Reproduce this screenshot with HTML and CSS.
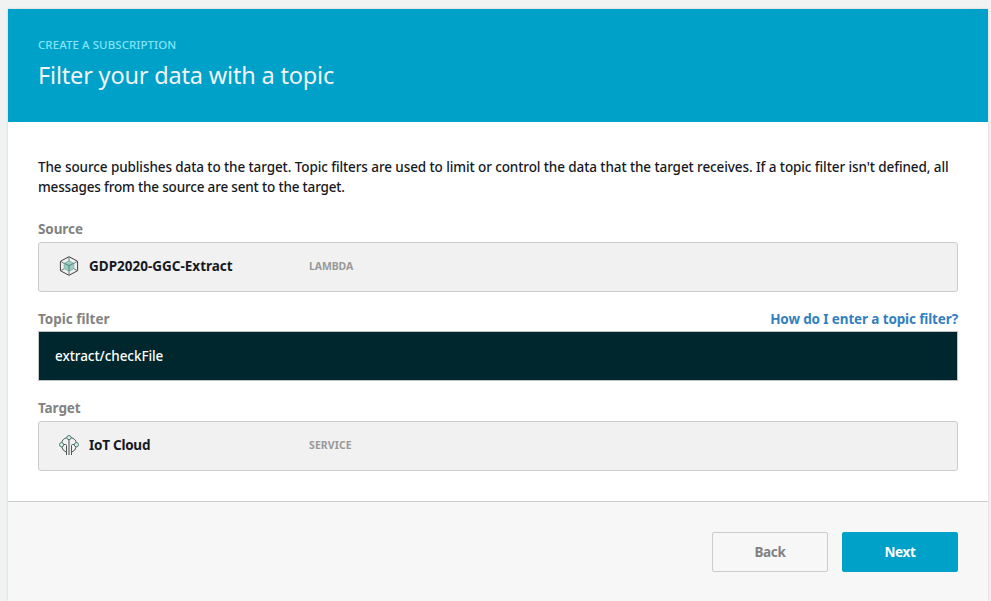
FILE: index.html
```html
<!DOCTYPE html>
<html lang="en">
<head>
<meta charset="utf-8">
<title>Create a subscription</title>
<link rel="stylesheet" href="styles.css">
</head>
<body>
<main class="panel">
  <header class="panel-header">
    <div class="eyebrow">CREATE A SUBSCRIPTION</div>
    <h1 class="title">Filter your data with a topic</h1>
  </header>
  <section class="content">
    <p class="intro"><span class="line-one">The source publishes data to the target. Topic filters are used to limit or control the data that the target receives. If a topic filter isn't defined, all</span><br><span class="line-two">messages from the source are sent to the target.</span></p>
    <div class="field">
      <div class="label-row"><span class="label source-label">Source</span></div>
      <div class="card">
        <svg class="icon" viewBox="0 0 20 20" fill="none">
          <path d="M10 .7 18.6 5.3V14.7L10 19.3 1.4 14.7V5.3Z" stroke="#3c4043"/>
          <path d="M10 1V6M2 5.5 6 8M18 5.5 14 8M2 14.5 5.5 12.5M18 14.5 14.5 12.5M10 14V19" stroke="#73777a"/>
          <path d="M10 4.8 14.8 7.3V12.7L10 15.3 5.2 12.7V7.3Z" fill="#9accc3" stroke="#78a9a1" stroke-width=".7"/>
          <path d="M5.4 7.4 10 9.6 14.6 7.4M10 9.6V15" stroke="#55827c"/>
        </svg>
        <span class="name source-name">GDP2020-GGC-Extract</span>
        <span class="kind lambda">LAMBDA</span>
      </div>
    </div>
    <div class="field">
      <div class="label-row"><label class="label filter-label" for="topic">Topic filter</label><a class="help">How do I enter a topic filter?</a></div>
      <input class="topic" id="topic" type="text" value="extract/checkFile">
    </div>
    <div class="field">
      <div class="label-row"><span class="label target-label">Target</span></div>
      <div class="card">
        <svg class="icon" viewBox="0 0 20 20" fill="none">
          <path d="M8 2.6Q3.2 3.8 2.6 8M12 2.6Q16.8 3.8 17.4 8M2.6 11.5Q3.5 15.8 7.5 17.3M17.4 11.5Q16.5 15.8 12.5 17.3" stroke="#505557"/>
          <path d="M4 9.5H6.5Q7.5 9.5 7.5 10.5V20M16 9.5H13.5Q12.5 9.5 12.5 10.5V20" stroke="#505557"/>
          <path d="M10 4V20" stroke="#999d9d" stroke-width="2"/>
          <circle cx="10" cy="2.6" r="2.1" fill="#d6f2ea" stroke="#527b74"/>
          <circle cx="2.6" cy="9.7" r="2.1" fill="#d6f2ea" stroke="#527b74"/>
          <circle cx="17.4" cy="9.7" r="2.1" fill="#d6f2ea" stroke="#527b74"/>
        </svg>
        <span class="name target-name">IoT Cloud</span>
        <span class="kind service">SERVICE</span>
      </div>
    </div>
  </section>
  <footer class="footer">
    <button class="button back">Back</button>
    <button class="button next">Next</button>
  </footer>
</main>
</body>
</html>
```
FILE: styles.css
```css
* { box-sizing: border-box; }
body {
  margin: 0;
  padding: 9px 3px 0 8px;
  height: 601px;
  overflow: hidden;
  background: #f1f3f3;
  color: #16191f;
  font: 14px/20px "Noto Sans", "Open Sans", sans-serif;
}
.panel {
  display: flex;
  flex-direction: column;
  height: 592px;
  background: #fff;
  box-shadow: 0 0 2px rgba(0, 0, 0, .16);
}
.panel-header { height: 113px; padding: 26px 30px; background: #00a1c9; }
.eyebrow { font-size: 11.5px; line-height: 20px; letter-spacing: .07px; font-weight: 500; color: #80e5f7; white-space: nowrap; }
.title { margin: 3px 0 0; font-size: 23.5px; line-height: 34px; font-weight: 400; letter-spacing: -.18px; color: #f2f3f3; white-space: nowrap; }
.content { height: 379px; padding: 35px 30px 0; }
.intro { margin: 0; white-space: nowrap; font-size: 13.5px; font-weight: 500; }
.line-one { letter-spacing: -.093px; }
.line-two { letter-spacing: -.17px; }
.field { margin-top: 17px; }
.intro + .field { margin-top: 22px; }
.label-row { display: flex; justify-content: space-between; height: 23px; }
.label { font-weight: 700; font-size: 13.5px; color: #828282; }
.source-label, .target-label { letter-spacing: -.1px; }
.help { font-weight: 700; font-size: 13.5px; letter-spacing: -.13px; color: #337fbf; }
.card { display: flex; align-items: center; height: 50px; padding: 0 20px 2px; border: 1px solid #ccc; border-radius: 3px; background: #f1f1f1; }
.icon { flex: none; width: 20px; height: 20px; }
.name { width: 220px; margin-left: 10px; font-weight: 700; font-size: 13.5px; white-space: nowrap; }
.target-name { letter-spacing: -.25px; }
.kind { font-weight: 700; font-size: 10.5px; color: #999; }
.lambda { letter-spacing: -.1px; }
.service { letter-spacing: .1px; }
.topic { display: block; width: 100%; height: 50px; margin-top: -1px; padding: 0 16px; border: 1px solid #bfc4c5; border-radius: 0; background: #00272e; color: #fff; font: 500 13.5px/20px "Noto Sans", sans-serif; letter-spacing: -.06px; outline: 0; }
.footer { display: flex; justify-content: flex-end; gap: 14px; height: 100px; padding: 30px 30px 0; border-top: 1px solid #ccc; background: #f7f7f7; }
.button { width: 116px; height: 40px; padding: 0; border: 1px solid #ccc; border-radius: 2px; font: 700 13.5px/20px "Noto Sans", sans-serif; letter-spacing: -.3px; }
.back { background: #f7f7f7; color: #828282; }
.next { border-color: #00a1c9; background: #00a1c9; color: #fff; }
```
